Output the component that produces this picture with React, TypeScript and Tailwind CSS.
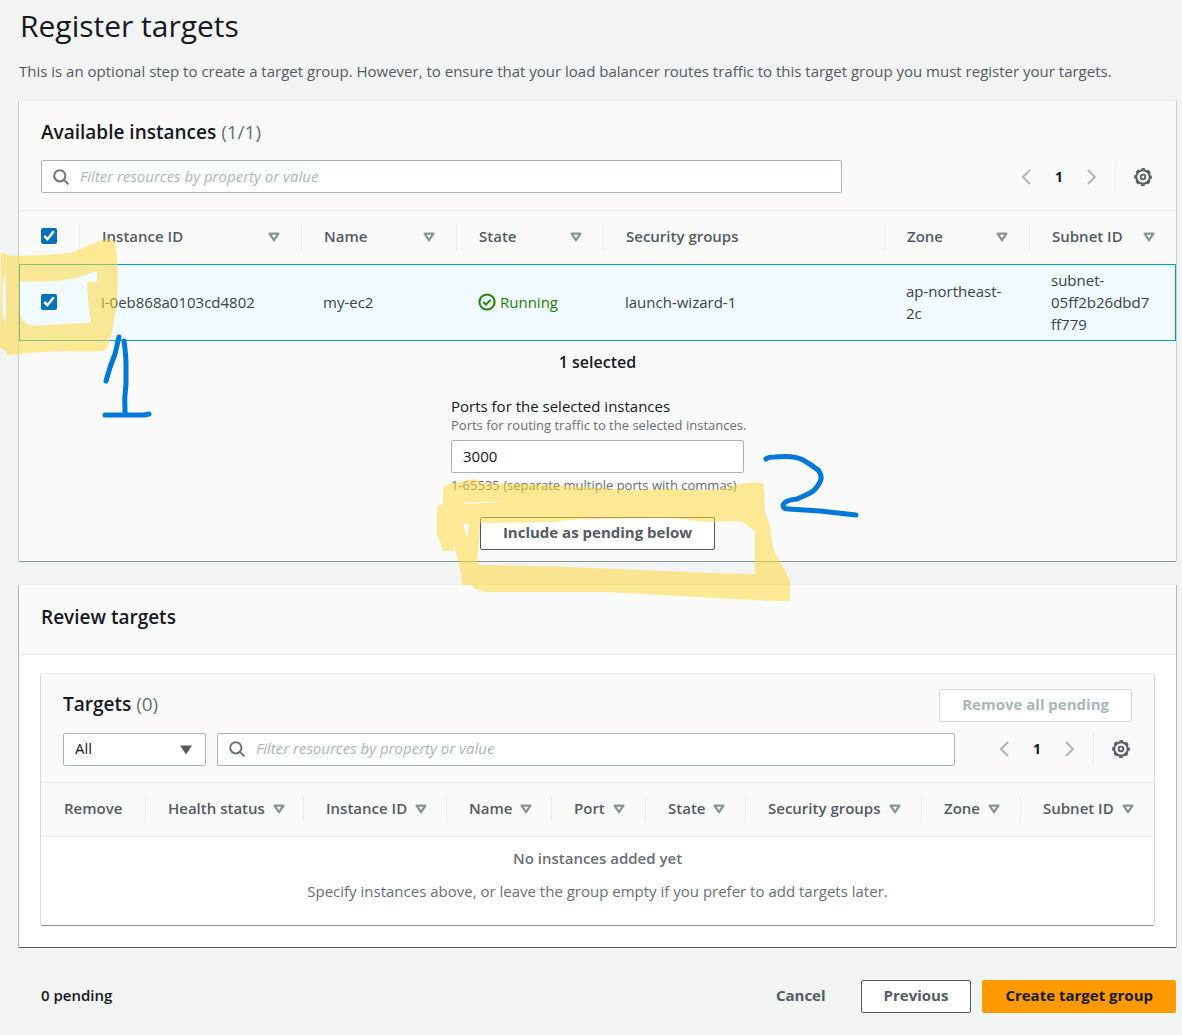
import { useId, useState } from "react";
import type { ReactNode } from "react";

function SearchIcon() {
  return (
    <svg viewBox="0 0 16 16" className="h-4 w-4" fill="none" stroke="#687078" strokeWidth="2">
      <circle cx="6.8" cy="6.8" r="5.6" />
      <path d="M10.9 10.9 15.4 15.2" />
    </svg>
  );
}

function GearIcon() {
  return (
    <svg viewBox="0 0 18 18" className="h-[18px] w-[18px]" fill="none" stroke="#545b64">
      <circle cx="9" cy="9" r="6.8" strokeWidth="2" />
      <circle cx="9" cy="9" r="8.1" strokeWidth="1.6" strokeDasharray="3.6 2.76" strokeDashoffset="1.8" />
      <circle cx="9" cy="9" r="2.3" strokeWidth="1.8" />
    </svg>
  );
}

function SortIcon() {
  return (
    <svg viewBox="0 0 12 10" className="h-[10px] w-3 shrink-0" fill="none" stroke="#879596" strokeWidth="2.3" strokeLinejoin="round">
      <path d="M1.6 1.6h8.8L6 8.2z" />
    </svg>
  );
}

function Chevron({ label, d }: { label: string; d: string }) {
  return (
    <button type="button" aria-label={label} className="flex h-8 w-[22px] items-center justify-center">
      <svg viewBox="0 0 10 16" className="h-4 w-[10px]" fill="none" stroke="#aab7b8" strokeWidth="2">
        <path d={d} />
      </svg>
    </button>
  );
}

function Pager() {
  return (
    <div className="flex shrink-0 items-center pr-0.5">
      <Chevron label="Previous page" d="M9 1 2 8l7 7" />
      <button type="button" aria-label="Page 1" className="w-11 text-[14px] font-bold text-[#16191f]">1</button>
      <Chevron label="Next page" d="M1 1l7 7-7 7" />
      <div className="ml-3 flex h-8 items-center border-l border-[#eaeded] pl-[18px]">
        <button type="button" aria-label="Preferences">
          <GearIcon />
        </button>
      </div>
    </div>
  );
}

function SearchBox({ className }: { className: string }) {
  return (
    <label className={"relative flex items-center " + className}>
      <span className="absolute left-3">
        <SearchIcon />
      </span>
      <input
        type="search"
        aria-label="Filter resources"
        placeholder="Filter resources by property or value"
        className="h-[33px] w-full rounded-xs border border-[#aab7b8] bg-white pr-3 pb-0.5 pl-[38px] text-[15px] placeholder:text-[#aab7b8] placeholder:italic"
      />
    </label>
  );
}

function HeaderCell({ children, sortable = true, spread = false }: { children: ReactNode; sortable?: boolean; spread?: boolean }) {
  return (
    <th scope="col" className="p-0 text-left font-semibold">
      <div className={"flex h-[26px] items-center gap-2 border-l border-[#eaeded] pr-[21px] pl-[22px] whitespace-nowrap " + (spread ? "justify-between" : "")}>
        <span className="pb-0.5">{children}</span>
        {sortable && <SortIcon />}
      </div>
    </th>
  );
}

const panel = "rounded-xs border border-t-[#eaeded]";
const button = "h-[33px] rounded-xs border px-[22px] pb-0.5 text-[15px] font-bold";

function Annotations() {
  return (
    <svg aria-hidden="true" viewBox="0 0 1182 1035" className="pointer-events-none absolute top-0 left-0 h-[1035px] w-[1182px]">
      <g fill="#ffd633" fillOpacity="0.52" fillRule="evenodd">
        <path d="M1 253H6L8 256Q40 256 71 253L90 245Q101 240 108 239Q115 238 116 246Q119 275 117 299Q114 325 109 344L107 347L103 351Q80 352 60 351Q35 352 8 355L6 351L0 348ZM20 281Q50 283 76 278L97 271V282H87Q88 305 91 323Q60 324 32 326Q20 323 20 310ZM6 273Q2 278 2 300Q2 320 6 323Z" />
        <path d="M443 489Q444 485 450 484L470 480Q478 478 482 483Q515 484 547 485Q590 487 627 490L673 489Q705 492 725 488Q742 482 762 483Q764 484 764 487L765 512Q769 520 771 533Q772 548 777 557L790 580V601Q770 601 753 600L607 592H487Q477 591 471 585H462Q461 568 458 560L454 545L453 551H443Q440 541 437 535V508Q438 505 443 504ZM480 523Q520 523 553 522Q575 519 593 519L673 518L707 522L740 521Q750 526 755 532V574Q720 574 687 572Q610 569 547 566L480 565L477 561L479 543ZM463 524H469L467 538ZM463 503Q485 501 507 502Q485 503 463 504Z" />
      </g>
      <g fill="none" stroke="#0078d7" strokeWidth="5" strokeLinecap="round" strokeLinejoin="round">
        <path d="M119 337 115 354Q110 366 106 381M124 341Q126 355 126 365V384Q124 398 125 412M105 415H144L149 414" />
        <path d="M766 459Q768 457 775 457Q794 455 803 460Q812 465 818 470Q823 476 820 482Q815 491 810 493Q804 496 797 499Q785 500 783 505Q783 509 789 509L820 511L856 515" />
      </g>
    </svg>
  );
}

export default function App() {
  const portsId = useId();
  const [ports, setPorts] = useState("3000");
  return (
    <div className="relative min-h-screen overflow-hidden bg-[#f2f3f3] pr-[5px] pb-[22px] pl-[18px] font-['Open_Sans','Noto_Sans',sans-serif] text-[15px] leading-[22px] text-[#16191f]">
      <h1 className="pt-2 pl-0.5 text-[30px] leading-9">Register targets</h1>
      <p className="mt-4 pl-px text-[#545b64]">
        This is an optional step to create a target group. However, to ensure that your load balancer routes traffic to this target group you must register your targets.
      </p>

      <section className={panel + " mt-[18px] border-x-[#c9d0d0] border-b-[#879596] bg-[#fafafa]"}>
        <div className="px-[22px] pt-[18px] pb-[17px]">
          <h2 className="text-[19px] leading-[26px] font-semibold">
            Available instances <span className="font-normal text-[#687078]">(1/1)</span>
          </h2>
          <div className="mt-[15px] flex items-center justify-between">
            <SearchBox className="w-[72%]" />
            <Pager />
          </div>
        </div>

        <table className="w-full table-fixed border-t border-[#eaeded]">
          <colgroup>
            <col className="w-[60px]" />
            <col className="w-[222px]" />
            <col className="w-[155px]" />
            <col className="w-[147px]" />
            <col className="w-[281px]" />
            <col className="w-[145px]" />
            <col className="w-[147px]" />
          </colgroup>
          <thead>
            <tr className="h-[53px] text-[#545b64]">
              <th scope="col" className="p-0 pb-0.5 pl-[22px] text-left">
                <input type="checkbox" defaultChecked aria-label="Select all instances" className="block size-4 accent-[#0073bb]" />
              </th>
              <HeaderCell spread>Instance ID</HeaderCell>
              <HeaderCell spread>Name</HeaderCell>
              <HeaderCell spread>State</HeaderCell>
              <HeaderCell sortable={false}>Security groups</HeaderCell>
              <HeaderCell spread>Zone</HeaderCell>
              <HeaderCell spread>Subnet ID</HeaderCell>
            </tr>
          </thead>
          <tbody>
            <tr className="h-[77px] bg-[#f1faff] text-[#3b424b] outline -outline-offset-1 outline-[#00a1c9]">
              <td className="pl-[22px]">
                <input type="checkbox" defaultChecked aria-label="Select i-0eb868a0103cd4802" className="block size-4 accent-[#0073bb]" />
              </td>
              <td className="pl-[22px]">i-0eb868a0103cd4802</td>
              <td className="pl-[22px]">my-ec2</td>
              <td className="pl-[22px]">
                <span className="flex items-center gap-1 text-[#1d8102]">
                  <svg viewBox="0 0 18 18" className="h-[18px] w-[18px]" fill="none" stroke="currentColor" strokeWidth="2">
                    <circle cx="9" cy="9" r="7.600" />
                    <path d="m5.200 9 2.700 2.600 4.700-4.700" />
                  </svg>
                  Running
                </span>
              </td>
              <td className="pl-[22px]">launch-wizard-1</td>
              <td className="pr-5 pl-[22px]">ap-northeast-2c</td>
              <td className="pr-6 pl-[22px] wrap-break-word">subnet-05ff2b26dbd7ff779</td>
            </tr>
          </tbody>
        </table>

        <div className="flex flex-col items-center pt-2.5 pb-[11px]">
          <p className="text-[16px] font-semibold">1 selected</p>
          <div className="mt-[22px] flex w-[293px] flex-col">
            <label htmlFor={portsId}>Ports for the selected instances</label>
            <span className="text-[13px] leading-4 whitespace-nowrap text-[#687078]">Ports for routing traffic to the selected instances.</span>
            <input
              id={portsId}
              value={ports}
              onChange={(e) => setPorts(e.target.value)}
              className="mt-[7px] h-[33px] rounded-xs border border-[#aab7b8] bg-white px-[11px] text-[15px]"
            />
            <span className="mt-[3px] text-[13px] leading-[18px] whitespace-nowrap text-[#687078]">1-65535 (separate multiple ports with commas)</span>
          </div>
          <button type="button" className={button + " mt-[23px] border-[#545b64] bg-white text-[#545b64]"}>
            Include as pending below
          </button>
        </div>
      </section>

      <section className={panel + " mt-[22px] border-x-[#aab7b8] border-b-[#545b64] bg-white"}>
        <div className="border-b border-[#eaeded] bg-[#fafafa] px-[22px] pt-[19px] pb-6">
          <h2 className="text-[19px] leading-[26px] font-semibold">Review targets</h2>
        </div>
        <div className="px-[21px] pt-[18px] pb-[21px]">
          <div className={panel + " border-x-[#d5dbdb] border-b-[#879596] bg-white"}>
            <div className="bg-[#fafafa] px-[22px] pt-[15px] pb-4">
              <div className="flex items-center justify-between">
                <h3 className="pb-0.5 text-[19px] leading-[26px] font-semibold">
                  Targets <span className="font-normal text-[#687078]">(0)</span>
                </h3>
                <button type="button" disabled className={button + " border-[#d5dbdb] bg-white text-[#aab7b8]"}>
                  Remove all pending
                </button>
              </div>
              <div className="mt-[11px] flex items-center">
                <div className="relative w-[143px] shrink-0">
                  <select aria-label="Target filter" className="h-[33px] w-full appearance-none rounded-xs border border-[#aab7b8] bg-white px-[11px] pb-0.5 text-[15px]">
                    <option>All</option>
                  </select>
                  <svg viewBox="0 0 12 10" className="pointer-events-none absolute top-3 right-[14px] h-[10px] w-3" fill="#545b64">
                    <path d="M0 .5h12L6 9.500z" />
                  </svg>
                </div>
                <SearchBox className="mr-[38px] ml-[11px] flex-1" />
                <Pager />
              </div>
            </div>
            <table className="w-full table-fixed border-t border-[#eaeded]">
              <colgroup>
                <col className="w-[104px]" />
                <col className="w-[158px]" />
                <col className="w-[143px]" />
                <col className="w-[105px]" />
                <col className="w-[94px]" />
                <col className="w-[100px]" />
                <col className="w-[176px]" />
                <col className="w-[99px]" />
                <col className="w-[134px]" />
              </colgroup>
              <thead>
                <tr className="h-[54px] border-b border-[#eaeded] bg-[#fafafa] text-[#545b64]">
                  <th scope="col" className="p-0 pb-0.5 pl-[23px] text-left font-semibold">Remove</th>
                  <HeaderCell>Health status</HeaderCell>
                  <HeaderCell>Instance ID</HeaderCell>
                  <HeaderCell>Name</HeaderCell>
                  <HeaderCell>Port</HeaderCell>
                  <HeaderCell>State</HeaderCell>
                  <HeaderCell>Security groups</HeaderCell>
                  <HeaderCell>Zone</HeaderCell>
                  <HeaderCell>Subnet ID</HeaderCell>
                </tr>
              </thead>
              <tbody>
                <tr>
                  <td colSpan={9} className="pt-[10px] pb-[23px] text-center text-[#687078]">
                    <p className="font-semibold">No instances added yet</p>
                    <p className="mt-[11px]">Specify instances above, or leave the group empty if you prefer to add targets later.</p>
                  </td>
                </tr>
              </tbody>
            </table>
          </div>
        </div>
      </section>

      <footer className="mt-8 flex items-center pr-px pl-[23px]">
        <p className="flex-1 pb-0.5 font-semibold">0 pending</p>
        <button type="button" className="mr-[35px] pb-0.5 font-bold text-[#545b64]">Cancel</button>
        <button type="button" className={button + " border-[#545b64] bg-white text-[#545b64]"}>Previous</button>
        <button type="button" className={button + " ml-[11px] border-[#ff9900] bg-[#ff9900] text-[#16191f]"}>Create target group</button>
      </footer>

      <Annotations />
    </div>
  );
}
